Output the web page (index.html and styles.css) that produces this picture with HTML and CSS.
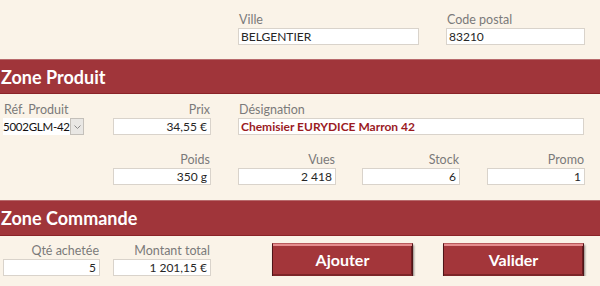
FILE: index.html
```html
<!DOCTYPE html>
<html lang="fr">
  <head>
    <meta charset="UTF-8" />
    <title>Fiche commande</title>
    <link rel="stylesheet" href="styles.css">
  </head>
  <body>
    <!-- Client -->
    <div class="row row-top">
      <div class="field w-ville">
        <label>Ville</label>
        <div class="box">BELGENTIER</div>
      </div>
      <div class="field w-cp">
        <label>Code postal</label>
        <div class="box">83210</div>
      </div>
    </div>

    <div class="band band-produit">Zone Produit</div>

    <div class="row row-ref">
      <div class="field w-ref">
        <label>Réf. Produit</label>
        <div class="combo">
          <span class="combo-text">5002GLM-42</span>
          <span class="combo-btn">
            <svg width="7" height="4" viewBox="0 0 7 4"><path d="M0.5 0.5 L3.5 3.5 L6.5 0.5" fill="none" stroke="#8a8a8a" stroke-width="1"/></svg>
          </span>
        </div>
      </div>
      <div class="field w-col right">
        <label>Prix</label>
        <div class="box">34,55 €</div>
      </div>
      <div class="field w-desig">
        <label>Désignation</label>
        <div class="box desig">Chemisier EURYDICE Marron 42</div>
      </div>
    </div>

    <div class="row row-stats">
      <div class="field w-col right">
        <label>Poids</label>
        <div class="box">350 g</div>
      </div>
      <div class="field w-col right">
        <label>Vues</label>
        <div class="box">2 418</div>
      </div>
      <div class="field w-col right">
        <label>Stock</label>
        <div class="box">6</div>
      </div>
      <div class="field w-col right">
        <label>Promo</label>
        <div class="box">1</div>
      </div>
    </div>

    <div class="band band-commande">Zone Commande</div>

    <div class="row row-cmd">
      <div class="field w-qte right">
        <label>Qté achetée</label>
        <div class="box">5</div>
      </div>
      <div class="field w-col right">
        <label>Montant total</label>
        <div class="box">1 201,15 €</div>
      </div>
      <button class="btn btn-ajouter">Ajouter</button>
      <button class="btn btn-valider">Valider</button>
    </div>
  </body>
</html>
```

FILE: styles.css
```css
body {
  margin: 0;
  padding: 0;
  background: #faf3e8;
  font-family: "Lato", "Open Sans", sans-serif;
  font-size: 12px;
  color: #262626;
}

.row {
  display: flex;
  align-items: flex-end;
}

.field {
  display: flex;
  flex-direction: column;
}

.field label {
  color: #7a7a7a;
  font-size: 12.5px;
  line-height: 14px;
  height: 14px;
  margin-bottom: 1px;
  padding: 0 1px;
  white-space: nowrap;
}

.field.right label {
  text-align: right;
}

.box {
  box-sizing: border-box;
  height: 17px;
  line-height: 15px;
  background: #fff;
  border: 1px solid #d9d3cb;
  padding: 0 3px 0 2px;
  white-space: nowrap;
  overflow: hidden;
}

.field.right .box {
  text-align: right;
}

.box.desig {
  color: #9b1b1f;
  font-weight: bold;
}

/* top row */
.row-top {
  padding: 13px 0 0 238px;
}

.w-ville {
  width: 181px;
}

.w-cp {
  width: 139px;
  margin-left: 27px;
}

/* bands */
.band {
  background: #a0353a;
  color: #fff;
  font-weight: bold;
  font-size: 18px;
  height: 35px;
  line-height: 35px;
  padding-left: 1px;
  box-sizing: border-box;
  border-top: 1px solid #b86a6c;
  border-bottom: 1px solid #8a2328;
}

.band-produit {
  margin-top: 14px;
}

.band-commande {
  margin-top: 15px;
  height: 36px;
  line-height: 34px;
}

/* product rows */
.row-ref {
  padding: 9px 0 0 3px;
}

.w-ref {
  width: 81px;
}

.w-col {
  width: 98px;
}

.row-ref .w-col {
  margin-left: 29px;
}

.w-desig {
  width: 346px;
  margin-left: 27px;
}

.combo {
  display: flex;
  height: 17px;
  box-sizing: border-box;
  background: #fff;
}

.combo-text {
  flex: 1;
  line-height: 17px;
  font-size: 11.5px;
  letter-spacing: -0.25px;
  color: #111;
  white-space: nowrap;
}

.combo-btn {
  width: 14px;
  flex: none;
  box-sizing: border-box;
  border: 1px solid #c4c0ba;
  background: #e9e7e4;
  display: flex;
  align-items: center;
  justify-content: center;
}

.row-stats {
  padding: 18px 0 0 113px;
}

.row-stats .w-col + .w-col {
  margin-left: 27px;
}

.row-stats .w-col:nth-child(3) {
  margin-left: 26px;
}

/* commande */
.row-cmd {
  padding: 7px 0 0 3px;
}

.w-qte {
  width: 97px;
}

.row-cmd .w-col {
  margin-left: 13px;
}

.btn {
  width: 141px;
  height: 34px;
  box-sizing: border-box;
  background: #a3363a;
  color: #fff;
  font-family: "Lato", "Open Sans", sans-serif;
  font-weight: bold;
  font-size: 16px;
  border: 1px solid #4e1518;
  border-top-color: #b85a5c;
  box-shadow: inset 0 2px 0 #e58d8e, inset 0 -2px 0 #7d2528, inset -1px 0 0 #6a1d20,
    1px 2px 2px rgba(0, 0, 0, 0.45);
  padding: 0 0 2px;
  cursor: pointer;
}

.btn-ajouter {
  margin-left: 61px;
  margin-bottom: -1px;
}

.btn-valider {
  margin-left: 30px;
  margin-bottom: -1px;
}
```
